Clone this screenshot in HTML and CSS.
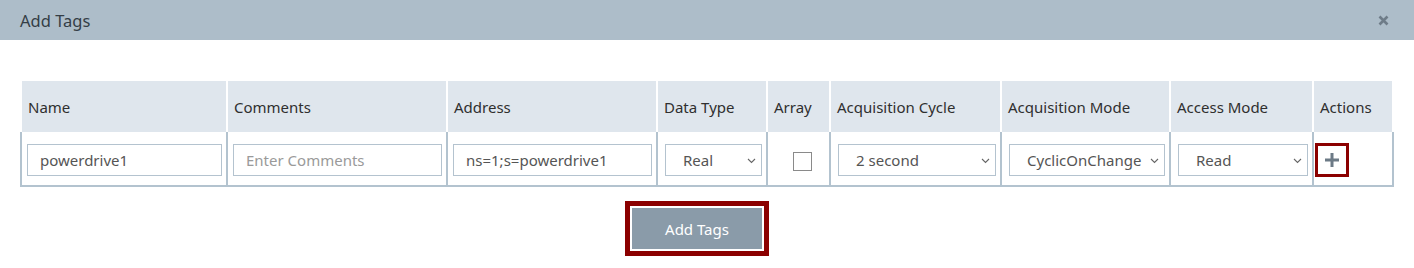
FILE: index.html
```html
<!DOCTYPE html>
<html lang="en">
<head>
<meta charset="utf-8">
<title>Add Tags</title>
<link rel="stylesheet" href="styles.css">
</head>
<body>
<div class="dialog">
  <div class="titlebar">
    <span class="title">Add Tags</span>
    <svg class="close" width="11" height="11" viewBox="0 0 11 11"><path d="M1.5 1.5 L9.5 9.5 M9.5 1.5 L1.5 9.5" stroke="#6e7c88" stroke-width="2.6" stroke-linecap="butt" fill="none"/></svg>
  </div>
  <div class="content">
    <div class="table">
      <div class="row head">
        <div class="th">Name</div>
        <div class="th">Comments</div>
        <div class="th">Address</div>
        <div class="th">Data Type</div>
        <div class="th">Array</div>
        <div class="th">Acquisition Cycle</div>
        <div class="th">Acquisition Mode</div>
        <div class="th">Access Mode</div>
        <div class="th">Actions</div>
      </div>
      <div class="row body">
        <div class="td"><input class="field" type="text" value="powerdrive1"></div>
        <div class="td"><input class="field" type="text" placeholder="Enter Comments"></div>
        <div class="td"><input class="field" type="text" value="ns=1;s=powerdrive1"></div>
        <div class="td"><div class="sel"><select><option>Real</option></select><svg class="chev" width="9" height="6" viewBox="0 0 9 6"><path d="M1 1 L4.5 4.5 L8 1" stroke="#666" stroke-width="1.1" fill="none"/></svg></div></div>
        <div class="td cb"><span class="check"></span></div>
        <div class="td"><div class="sel"><select><option>2 second</option></select><svg class="chev" width="9" height="6" viewBox="0 0 9 6"><path d="M1 1 L4.5 4.5 L8 1" stroke="#666" stroke-width="1.1" fill="none"/></svg></div></div>
        <div class="td"><div class="sel"><select><option>CyclicOnChange</option></select><svg class="chev" width="9" height="6" viewBox="0 0 9 6"><path d="M1 1 L4.5 4.5 L8 1" stroke="#666" stroke-width="1.1" fill="none"/></svg></div></div>
        <div class="td"><div class="sel"><select><option>Read</option></select><svg class="chev" width="9" height="6" viewBox="0 0 9 6"><path d="M1 1 L4.5 4.5 L8 1" stroke="#666" stroke-width="1.1" fill="none"/></svg></div></div>
        <div class="td act"><button class="plus" type="button"><svg width="16" height="16" viewBox="0 0 16 16"><path d="M8 1 V15 M1 8 H15" stroke="#6c7a86" stroke-width="3" fill="none"/></svg></button></div>
      </div>
    </div>
    <div class="footer">
      <button class="addbtn" type="button">Add Tags</button>
    </div>
  </div>
</div>
</body>
</html>
```
FILE: styles.css
```css
* { box-sizing: border-box; }
html, body { margin: 0; padding: 0; background: #fff; }
body { font-family: "Noto Sans", "Open Sans", sans-serif; color: #333; }

.dialog { min-height: 268px; }
.titlebar {
  height: 40px;
  background: #adbdc9;
  display: flex;
  align-items: center;
  justify-content: space-between;
  padding: 0 25px 0 20px;
}
.title { font-size: 16.5px; color: #343e46; }
.close { display: block; }

.content { padding: 41px 0 20px 0; }
.table { margin: 0 20px; width: 1374px; }
.row {
  display: grid;
  grid-template-columns: 204px 218px 208px 108px 61px 169px 167px 141px 78px;
  column-gap: 2px;
  padding: 0 2px;
}
.head { background: #fff; }
.th {
  background: #dfe6ed;
  height: 51px;
  display: flex;
  align-items: center;
  padding-left: 6px;
  font-size: 15px;
  color: #2f2f2f;
}
.body { background: #b3c3cf; padding-bottom: 2px; }
.td {
  background: #fff;
  height: 53px;
  padding: 12px 4px 0 5px;
}
.field {
  width: 100%;
  height: 32px;
  border: 1px solid #b4c3cf;
  padding: 0 12px;
  font-family: "Noto Sans", "Open Sans", sans-serif;
  font-size: 15px;
  color: #555;
  background: #fff;
  outline: none;
}
.field::placeholder { color: #9a9a9a; }

.sel { position: relative; padding-left: 2px; }
.sel select {
  -webkit-appearance: none;
  appearance: none;
  width: 100%;
  height: 32px;
  border: 1px solid #b4c3cf;
  border-radius: 0;
  background: #fff;
  padding: 0 20px 0 17px;
  font-family: "Noto Sans", "Open Sans", sans-serif;
  font-size: 15px;
  color: #555;
}
.chev { position: absolute; right: 6px; top: 14px; }

.cb { padding: 20px 0 0 25px; }
.check {
  display: block;
  width: 19px;
  height: 19px;
  border: 1px solid #8a8a8a;
  background: #fff;
}

.act { padding: 11px 0 0 1px; }
.plus {
  width: 34px;
  height: 34px;
  border: 3px solid #8b0000;
  background: #fff;
  padding: 0;
  display: flex;
  align-items: center;
  justify-content: center;
}

.footer {
  display: flex;
  justify-content: center;
  padding-right: 20px;
  margin-top: 21px;
}
.addbtn {
  width: 130px;
  height: 41px;
  background: #8a9ba9;
  color: #fff;
  border: none;
  font-family: "Noto Sans", "Open Sans", sans-serif;
  font-size: 15px;
  outline: 5px solid #8b0000;
  outline-offset: 2px;
}
```
